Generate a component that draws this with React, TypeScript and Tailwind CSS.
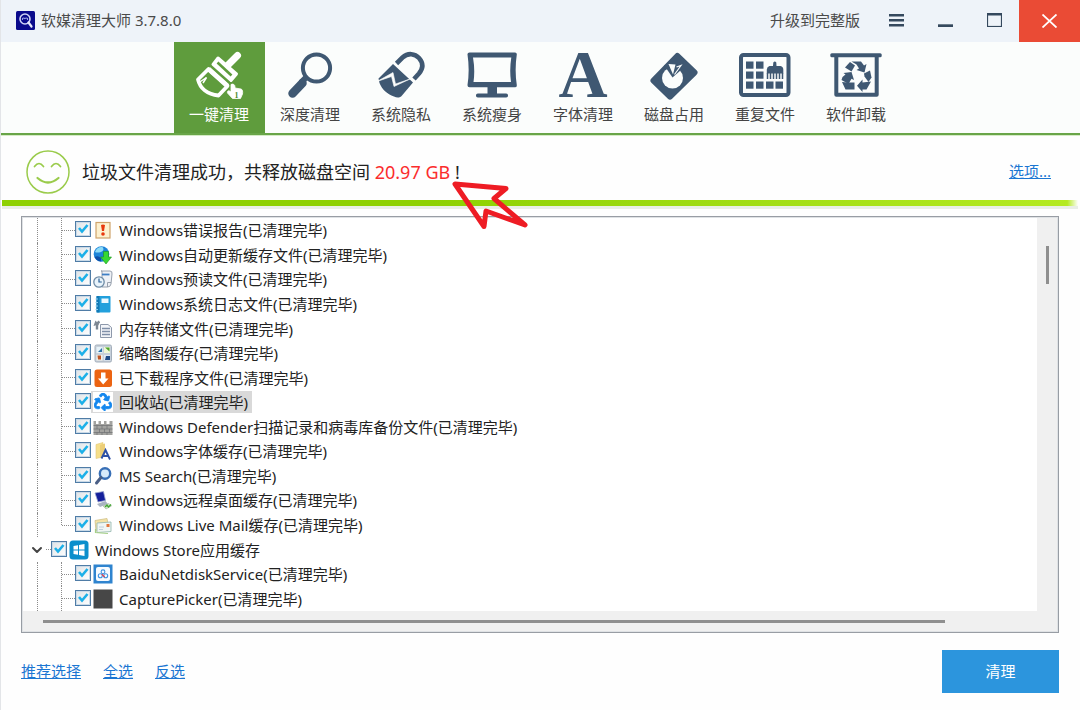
import React from 'react';
import { FaRecycle } from 'react-icons/fa';
import { ChevronDown } from 'lucide-react';
import clsx from 'clsx';

const SLATE = '#3f5872';

/* ---------- Toolbar icons ---------- */

function ToolIcon({ children }: { children: React.ReactNode }) {
  return (
    <svg viewBox="-2 0 52 49" className="h-[49px] w-[52px] overflow-visible" fill={SLATE} aria-hidden="true">
      {children}
    </svg>
  );
}

function BrushIcon() {
  return (
    <ToolIcon>
      <path d="M42.500 4.500 L33 14" stroke="#fff" strokeWidth="7" strokeLinecap="round" />
      <path d="M23 7 L41.500 23 L36 29.500 L18 13.500 Z" fill="#fff" stroke="#fff" strokeWidth="3" strokeLinejoin="round" />
      <path d="M22.500 11.500 L36.500 24.500" stroke="#5f9c3d" strokeWidth="2.600" />
      <path
        d="M13.500 18 L3 28.500 C5 37 12 43.500 23.500 44.500 L32.500 35 Z"
        fill="none"
        stroke="#fff"
        strokeWidth="3.800"
        strokeLinejoin="round"
      />
      <path d="M13.500 18 L32.500 35" stroke="#fff" strokeWidth="5" />
      <path d="M4 31.500 L11.500 26.500 L8 32" fill="none" stroke="#fff" strokeWidth="1.500" />
      <path
        d="M36 33.500 C38 32.500 40 33.500 40 36 L40 37 L46 38 C47.800 38.500 47.800 41 47.500 43 L45.500 47.500 L37.500 47.500 L32.500 42 C32 40 33.500 39 35.500 40.500 L36 41 Z"
        fill="#fff"
        stroke="#fff"
        strokeWidth="0.800"
      />
      <text x="39.500" y="46.500" fontSize="8" fontWeight="700" fontFamily="Liberation Serif, serif" fill="#4d8a2c">
        1
      </text>
    </ToolIcon>
  );
}

function MagnifierIcon() {
  return (
    <ToolIcon>
      <circle cx="30.500" cy="17" r="13.600" fill="none" stroke={SLATE} strokeWidth="4" />
      <path d="M20 26.500 L15 31.500" stroke={SLATE} strokeWidth="6" />
      <path d="M16.500 32 L6.500 42.500" stroke={SLATE} strokeWidth="8.500" strokeLinecap="round" />
    </ToolIcon>
  );
}

function PadlockIcon() {
  return (
    <ToolIcon>
      <path
        d="M19.500 12.500 L25.500 6.500 C31 1.500 38 2.500 42 7 C46 11.500 46.500 17 42 22.500 L37 28"
        fill="none"
        stroke={SLATE}
        strokeWidth="4.600"
      />
      <path d="M16 13 L36 31.500 L25 44.500 C23 47 20 47 17 45.500 C10 43 5 38.500 2.500 32 L1.500 27.500 Z" />
      <path d="M0 30.500 L16 21.500 L18.500 33 L33 28 L17 35.500 L14.500 25.500 Z" fill="#fbfdfc" stroke="#fbfdfc" strokeWidth="0.600" />
    </ToolIcon>
  );
}

function MonitorIcon() {
  return (
    <ToolIcon>
      <path
        fillRule="evenodd"
        d="M1.500 1.500 L47 1.500 Q49 1.500 48.800 3.500 Q46.500 19 48.800 34 Q49 36.300 47 36.300 L1.500 36.300 Q-0.700 36.300 -0.500 34 Q1.800 19 -0.500 3.500 Q-0.700 1.500 1.500 1.500 Z M5 6.500 Q7.200 19 5.500 31 L43 31 Q41.300 19 43.300 6.500 Z"
      />
      <rect x="19.500" y="36" width="9.500" height="7" />
      <rect x="8" y="42.500" width="32" height="4" rx="1.800" />
    </ToolIcon>
  );
}

function LetterIcon() {
  return (
    <ToolIcon>
      <text x="24" y="46" textAnchor="middle" fontSize="68" fontWeight="700" fontFamily="Liberation Serif, serif">
        A
      </text>
    </ToolIcon>
  );
}

function DiskIcon() {
  return (
    <ToolIcon>
      <path
        d="M27.300 5 L44.500 21.500 L20 45.500 L3.500 29.500 Z"
        stroke={SLATE}
        strokeWidth="6"
        strokeLinejoin="round"
      />
      <circle cx="22.500" cy="27" r="10.500" fill="#fbfdfc" />
      <path d="M22.500 26.500 L14 14 L33 13 L31 19 Z" />
      <path d="M18.500 13 L25.500 13.500 L23 23.500 Z" fill="#fbfdfc" />
      <path d="M26.500 16 L31 14.500 L24.500 23.500" fill="none" stroke="#fbfdfc" strokeWidth="1.200" />
    </ToolIcon>
  );
}

function DuplicateIcon() {
  const cells = [
    [5, 10.5], [15, 10.5],
    [5, 20.5], [15, 20.5],
    [5, 30.5], [15, 30.5], [25, 30.5], [34.5, 30.5],
  ];
  return (
    <ToolIcon>
      <rect x="0" y="4" width="47.500" height="40" rx="2.500" fill="none" stroke={SLATE} strokeWidth="4" />
      {cells.map(([x, y]) => (
        <rect key={`${x}-${y}`} x={x} y={y} width="7.500" height="7.200" />
      ))}
      <path d="M32.300 11.500 Q33.800 9.500 35.300 11.500 L35.500 15 L39.500 15 Q42.300 15.500 42.300 18.500 L42.300 22.500 L25.800 22.500 L25.800 18.500 Q26 15.500 28.500 15 L32 15 Z" />
      <path d="M26.500 22 V28 M29.500 22 V28 M32.500 22 V28 M35.500 22 V28 M38.500 22 V28 M41.500 22 V28" stroke={SLATE} strokeWidth="1.500" />
    </ToolIcon>
  );
}

function UninstallIcon() {
  return (
    <ToolIcon>
      <rect x="-1.700" y="2.300" width="51.400" height="4" rx="1.500" />
      <path d="M4.300 5 V43.700 H44.700 V5" fill="none" stroke={SLATE} strokeWidth="4" strokeLinejoin="round" />
      {/* three chasing arrows, each a folded band with its arrowhead */}
      <path d="M19.500 10.500 H29 L32 14.500 L34.500 13 L32.500 21.500 L24.500 19 L27 17.500 L24.500 13.500 Z" />
      <path d="M18 11 L23 14.500 L19.500 20.500 L13 16.500 Z" />
      <path d="M11.500 22 L19.500 21 L22 29 L19.500 27.800 L16.500 33 L9.500 29 L10.500 26 L13.500 23.500 Z" />
      <path d="M10 31 L13.500 38.500 H22.500 V31.500 H15.500 Z" />
      <path d="M32 22.500 L38 19.500 L39.500 26.500 L36.500 31 L32.500 25.500 Z" />
      <path d="M30.500 28.500 L25 34.800 L30.500 41 V38.500 H34.500 L39 30.500 L30.500 31.500 Z" />
    </ToolIcon>
  );
}

/* ---------- List icons ---------- */

function ItemIcon({ children }: { children: React.ReactNode }) {
  return (
    <svg viewBox="0 0 20 20" className="h-5 w-5 shrink-0" fill="none" aria-hidden="true">
      {children}
    </svg>
  );
}

const icons: Record<string, React.ReactNode> = {
  error: (
    <ItemIcon>
      <rect x="3" y="2.500" width="14" height="15.500" fill="#fdf1cf" stroke="#cfa46c" strokeWidth="1.200" />
      <path d="M8 5 Q10 3.800 12 5 L11 11 H9 Z" fill="#e8380d" />
      <circle cx="10" cy="14" r="1.800" fill="#e8380d" />
    </ItemIcon>
  ),
  update: (
    <ItemIcon>
      <circle cx="8.500" cy="9" r="7.800" fill="#1d84d8" />
      <path d="M2 7 Q4 1.500 9.500 2 Q12 5 8 7 Q4 8 2 7 Z" fill="#8fdcf7" />
      <path d="M1.500 12 Q5 10 8 13 L8 16.500 Q3.500 16 1.500 12 Z" fill="#0c4fa8" />
      <path d="M10.500 6.500 H15.500 V12 H18.500 L13 19 L7.500 12 H10.500 Z" fill="#37d832" stroke="#1c9420" strokeWidth="0.600" />
    </ItemIcon>
  ),
  prefetch: (
    <ItemIcon>
      <path d="M8 2 H17 Q19.500 2 19 5 L18 15 Q17.500 18 14.500 18 H9 V2 Z" fill="#eef1f6" stroke="#98a1ae" />
      <path d="M9 5.500 H16.500" stroke="#3e7ec4" strokeWidth="1.800" />
      <path d="M14.500 18 V13.500 H18" stroke="#98a1ae" />
      <circle cx="6" cy="13" r="5.200" fill="#e8f3fb" stroke="#6e8ba5" strokeWidth="1.300" />
      <path d="M6 9.500 V13 H8.800" stroke="#2b6196" strokeWidth="1.200" />
    </ItemIcon>
  ),
  log: (
    <ItemIcon>
      <rect x="3.500" y="2" width="14" height="16.500" rx="1" fill="#22a0dc" />
      <rect x="3.500" y="2" width="3" height="16.500" fill="#1279b5" />
      <rect x="8.500" y="4.500" width="7" height="4.500" fill="#eaf8ff" />
      <path d="M2.500 5 H5 M2.500 8.500 H5 M2.500 12 H5 M2.500 15.500 H5" stroke="#8ccff0" />
    </ItemIcon>
  ),
  dump: (
    <ItemIcon>
      <path d="M4 10.500 V7 Q4 4 6.500 2.500" stroke="#7d8792" strokeWidth="2.400" />
      <path d="M0.500 7 L2.500 1.500 L6 5.500 Z" fill="#7d8792" />
      <path d="M7.500 5.500 H15 L18.500 8.500 V18.500 H7.500 Z" fill="#f3f5f9" stroke="#8e99ab" />
      <path d="M9 9.500 H17 M9 12.500 H17 M9 15.500 H17" stroke="#7f8fa8" strokeWidth="1.400" />
    </ItemIcon>
  ),
  thumbs: (
    <ItemIcon>
      <rect x="2" y="2" width="16.500" height="17" rx="1.500" fill="#c7d0da" stroke="#a4afbb" />
      <rect x="3.500" y="4" width="6" height="6" fill="#e6f2f8" />
      <rect x="11" y="4" width="6" height="6" fill="#f0f7d6" />
      <rect x="3.500" y="12" width="6" height="5.500" fill="#f3f0e8" />
      <rect x="11" y="12" width="6" height="5.500" fill="#e0e9f6" />
      <path d="M5 9 L9 5 V9 Z" fill="#2871a8" />
      <path d="M12 4.500 L16.500 8.500 V4.500 Z" fill="#4da52b" />
      <path d="M4.500 12.500 H8 V16.500 H5 Z" fill="#bd5424" />
      <path d="M13 13 H17 V17 H12 Z" fill="#1e4b88" />
    </ItemIcon>
  ),
  download: (
    <ItemIcon>
      <rect x="1.500" y="1.500" width="17.500" height="17.500" rx="2.500" fill="#ec6412" />
      <path d="M8 4.500 H12.500 V10.500 H15.500 L10.200 16.500 L5 10.500 H8 Z" fill="#fff" />
    </ItemIcon>
  ),
  recycle: (
    <ItemIcon>
      <rect width="20" height="20" fill="#fff" />
      <FaRecycle x="1" y="1" size="18" color="#1487ee" stroke="#1487ee" strokeWidth="24" />
    </ItemIcon>
  ),
  defender: (
    <ItemIcon>
      <path d="M0.500 4 H3 V7 H5.500 V4 H8 V7 H11 V4 H13.500 V7 H16.500 V4 H19.500 V18 H0.500 Z" fill="#a3a3a0" />
      <path
        d="M0.500 8.500 H19.500 M0.500 12 H19.500 M0.500 15.500 H19.500 M4 8.500 V12 M9 8.500 V12 M14 8.500 V12 M6.500 12 V15.500 M11.500 12 V15.500 M16.500 12 V15.500 M4 15.500 V18 M9 15.500 V18 M14 15.500 V18"
        stroke="#6f7072"
        strokeWidth="0.700"
      />
    </ItemIcon>
  ),
  fonts: (
    <ItemIcon>
      <path d="M3 3.500 L10 1.500 V16 L3 17.500 Z" fill="#f6df8a" stroke="#e2c878" strokeWidth="0.600" />
      <path d="M7 4 L12 2.500 V15 L7 17 Z" fill="#ecce78" />
      <path d="M8.500 17.500 L12.500 9 L17 18.500 M10.500 15 H15" stroke="#2c50a6" strokeWidth="1.900" />
    </ItemIcon>
  ),
  search: (
    <ItemIcon>
      <circle cx="12" cy="7.500" r="5.200" fill="#d8ebfa" stroke="#386fb6" strokeWidth="2.400" />
      <path d="M8 11.500 L3.500 17" stroke="#4a5f86" strokeWidth="3" strokeLinecap="round" />
    </ItemIcon>
  ),
  remote: (
    <ItemIcon>
      <path d="M2 3 L10.500 1.500 L12.500 10.500 L5 12 Z" fill="#15209c" stroke="#9aa6cf" strokeWidth="0.800" />
      <path d="M4 14 L12.500 11 L15 14 L7 17 Z" fill="#a9b3c2" />
      <path d="M10 16 L16 13.500 L18.500 16 L13 19 Z" fill="#d7e3d4" stroke="#9fb39a" strokeWidth="0.600" />
      <path d="M12 17 L14 15 L15.500 17 L18 14.500" stroke="#42a832" strokeWidth="1.300" />
    </ItemIcon>
  ),
  mail: (
    <ItemIcon>
      <path d="M2 5.500 L14 3.500 L16 14 L3 16 Z" fill="#f5e3a4" stroke="#cfc08a" strokeWidth="0.800" />
      <path d="M4 8 L18 7 V16.500 L4 17.500 Z" fill="#f1f6f3" stroke="#9cbcb4" strokeWidth="0.900" />
      <path d="M2.500 14 L2.500 17.500 L15 18.500" stroke="#a5cf85" strokeWidth="1.200" />
      <rect x="13.500" y="9" width="3" height="3" fill="#e2773d" />
      <path d="M6 12 H11 M6 14.500 H10" stroke="#b3c5d6" strokeWidth="0.800" />
    </ItemIcon>
  ),
  store: (
    <ItemIcon>
      <rect x="0.500" y="0.500" width="19" height="19" rx="3.500" fill="#0b8fcc" />
      <path d="M4.500 6 L9 5.200 V9.500 H4.500 Z M10 5 L15.500 4 V9.500 H10 Z M4.500 10.500 H9 V14.800 L4.500 14.100 Z M10 10.500 H15.500 V16 L10 15 Z" fill="#fff" />
    </ItemIcon>
  ),
  baidu: (
    <ItemIcon>
      <rect x="0.500" y="0.500" width="19" height="19" fill="#2f84cf" />
      <rect x="3" y="3" width="14" height="14" rx="2" fill="#f7fbff" />
      <circle cx="10" cy="7.800" r="1.900" stroke="#3d91e0" strokeWidth="1.100" />
      <circle cx="7.300" cy="11.800" r="2" stroke="#3d91e0" strokeWidth="1.100" />
      <circle cx="12.700" cy="11.800" r="2" stroke="#3d91e0" strokeWidth="1.100" />
      <path d="M8.800 10.200 L11.600 13" stroke="#e2434f" strokeWidth="1.300" />
    </ItemIcon>
  ),
  capture: (
    <ItemIcon>
      <rect x="0.500" y="0.500" width="19" height="19" fill="#474747" />
    </ItemIcon>
  ),
};

/* ---------- Data ---------- */

const tools = [
  { label: '一键清理', icon: <BrushIcon />, active: true },
  { label: '深度清理', icon: <MagnifierIcon /> },
  { label: '系统隐私', icon: <PadlockIcon /> },
  { label: '系统瘦身', icon: <MonitorIcon /> },
  { label: '字体清理', icon: <LetterIcon /> },
  { label: '磁盘占用', icon: <DiskIcon /> },
  { label: '重复文件', icon: <DuplicateIcon /> },
  { label: '软件卸载', icon: <UninstallIcon /> },
];

interface TreeItem {
  label: string;
  icon: string;
  group?: boolean;
  selected?: boolean;
  last?: boolean;
}

const items: TreeItem[] = [
  { label: 'Windows错误报告(已清理完毕)', icon: 'error' },
  { label: 'Windows自动更新缓存文件(已清理完毕)', icon: 'update' },
  { label: 'Windows预读文件(已清理完毕)', icon: 'prefetch' },
  { label: 'Windows系统日志文件(已清理完毕)', icon: 'log' },
  { label: '内存转储文件(已清理完毕)', icon: 'dump' },
  { label: '缩略图缓存(已清理完毕)', icon: 'thumbs' },
  { label: '已下载程序文件(已清理完毕)', icon: 'download' },
  { label: '回收站(已清理完毕)', icon: 'recycle', selected: true },
  { label: 'Windows Defender扫描记录和病毒库备份文件(已清理完毕)', icon: 'defender' },
  { label: 'Windows字体缓存(已清理完毕)', icon: 'fonts' },
  { label: 'MS Search(已清理完毕)', icon: 'search' },
  { label: 'Windows远程桌面缓存(已清理完毕)', icon: 'remote' },
  { label: 'Windows Live Mail缓存(已清理完毕)', icon: 'mail', last: true },
  { label: 'Windows Store应用缓存', icon: 'store', group: true },
  { label: 'BaiduNetdiskService(已清理完毕)', icon: 'baidu' },
  { label: 'CapturePicker(已清理完毕)', icon: 'capture' },
];

/* ---------- Sections ---------- */

function TitleBar() {
  return (
    <header className="flex h-[42px] items-center bg-[#eef3f9] pb-0.5 pl-[15px] text-[#4a4a4a]">
      <svg viewBox="0 0 19 19" className="mr-1.5 h-[19px] w-[19px]" fill="none" aria-hidden="true">
        <rect width="19" height="19" rx="1.500" fill="#0a0a8c" />
        <circle cx="9" cy="8" r="5" stroke="#cfd3f5" strokeWidth="1.600" />
        <path d="M6.500 9 V7.500 Q7.500 6.500 8.800 7.500 Q10.500 6.500 11.500 7.500 V9" stroke="#9aa0e6" strokeWidth="1.100" />
        <path d="M12.500 11.500 L15.500 15.500" stroke="#e6e8fb" strokeWidth="2.200" strokeLinecap="round" />
      </svg>
      <h1 className="flex-1">软媒清理大师 3.7.8.0</h1>
      <a href="#upgrade">升级到完整版</a>
      <button type="button" aria-label="菜单" className="ml-3 flex h-10 w-[49px] items-center justify-center">
        <svg viewBox="0 0 15 13" className="h-[13px] w-[15px]" fill="#35495e">
          <path d="M0 0 H15 V2.500 H0 Z M0 5 H15 V7.500 H0 Z M0 10 H15 V12.500 H0 Z" />
        </svg>
      </button>
      <button type="button" aria-label="最小化" className="flex h-10 w-[49px] items-center justify-center">
        <svg viewBox="0 0 15 13" className="h-[13px] w-[15px]" fill="#35495e">
          <path d="M0 10.300 H15 V13 H0 Z" />
        </svg>
      </button>
      <button type="button" aria-label="最大化" className="flex h-10 w-[49px] items-center justify-center">
        <svg viewBox="0 0 15 14" className="h-[14px] w-[15px]" fill="none" stroke="#35495e">
          <rect x="0.500" y="0.500" width="14" height="13" strokeWidth="1.200" />
          <path d="M0 1.500 H15" strokeWidth="2" />
        </svg>
      </button>
      <button
        type="button"
        aria-label="关闭"
        className="-mb-0.5 flex h-[42px] w-[61px] items-center justify-center bg-[#ea4b35]"
      >
        <svg viewBox="0 0 15 14" className="h-[14px] w-[15px]" stroke="#fff" strokeWidth="1.800">
          <path d="M0.500 0.500 L14.500 13.500 M14.500 0.500 L0.500 13.500" />
        </svg>
      </button>
    </header>
  );
}

function Toolbar() {
  return (
    <nav className="flex justify-center border-b-2 border-[#69a548] bg-[#fbfdfc] pr-1.5 shadow-[0_1px_0_#d5ebc6]">
      {tools.map((tool) => (
        <button
          key={tool.label}
          type="button"
          className={clsx(
            'flex h-[91px] w-[91px] flex-col items-center pt-[9px]',
            tool.active ? 'bg-[#5f9c3d] text-white' : 'text-[#444]'
          )}
        >
          {tool.icon}
          <span className="mt-1 leading-5">{tool.label}</span>
        </button>
      ))}
    </nav>
  );
}

function StatusBanner() {
  return (
    <section>
      <div className="flex h-[65px] items-center pt-2 pr-[29px] pl-[25px]">
        <svg viewBox="0 0 44 44" className="mr-3 h-11 w-11" fill="none" stroke="#9acb4b" strokeLinecap="round" aria-hidden="true">
          <circle cx="22" cy="22" r="21" strokeWidth="1.500" />
          <path d="M8.500 16.500 Q13 10.500 17.500 16.500 M25.500 16.500 Q30 10.500 34.500 16.500" strokeWidth="1.700" />
          <path d="M11.500 28 Q22 37 32.500 28" strokeWidth="2.200" />
        </svg>
        <p className="flex-1 text-lg text-[#222]">
          垃圾文件清理成功，共释放磁盘空间{' '}
          <span className="relative text-[#fb2c2c]">
            20.97 GB
            <svg
              viewBox="0 0 78 50"
              className="pointer-events-none absolute top-5 left-[76px] z-10 h-[50px] w-[78px]"
              fill="none"
              stroke="#ee1c24"
              strokeWidth="5"
              strokeLinejoin="round"
              aria-hidden="true"
            >
              <path d="M4 4 L55 8.500 L43 18.500 L74 45 L35 31 L33 46.500 Z" />
            </svg>
          </span>{' '}
          !
        </p>
        <a href="#options" className="text-[#1b76d2] underline">选项...</a>
      </div>
      <div className="mr-0.5 ml-px h-1.5 bg-linear-to-r from-[#8ed102] from-40% via-[#b4ea20] via-99% to-transparent" />
      <div className="mr-0.5 ml-px h-[3px] bg-[#e9eee6]" />
    </section>
  );
}

function CheckBox({ id }: { id: string }) {
  return (
    <span className="relative mb-0.5 h-4 w-4 shrink-0 self-center">
      <input
        id={id}
        type="checkbox"
        defaultChecked
        className="peer block h-4 w-4 appearance-none border border-[#4f7ca6] bg-linear-to-br from-[#dfe3e6] to-white shadow-[inset_0_0_0_1px_#c9dae8]"
      />
      <svg
        viewBox="0 0 16 16"
        className="pointer-events-none absolute inset-0 hidden h-4 w-4 peer-checked:block"
        fill="none"
        stroke="#1cb0e8"
        strokeWidth="2.600"
      >
        <path d="M4 7 L7 10.500 L12.500 4" />
      </svg>
    </span>
  );
}

function TreeRow({ item }: { item: TreeItem }) {
  const id = `item-${item.icon}`;
  return (
    <li className="flex min-h-6 flex-1">
      {item.group ? (
        <>
          <button type="button" aria-label="折叠" className="-ml-[9px] flex w-[18px] items-center justify-center">
            <ChevronDown className="h-4 w-4 shrink-0 text-[#444]" strokeWidth={3} />
          </button>
          <span className="w-[5px] self-center border-t border-dotted border-[#8c8c8c]" />
        </>
      ) : (
        <>
          <span className="w-6 border-l border-dotted border-[#8c8c8c]" />
          <span className="flex w-3.5">
            <span className={clsx('w-px border-l border-dotted border-[#8c8c8c]', item.last && 'mb-3')} />
            <span className="flex-1 self-center border-t border-dotted border-[#8c8c8c]" />
          </span>
        </>
      )}
      <CheckBox id={id} />
      <label
        htmlFor={id}
        className={clsx(
          'flex items-center gap-1.5 self-center py-px pr-1 pl-0.5 leading-5 whitespace-nowrap text-[#222]',
          item.selected && 'bg-[#d9d9d9]'
        )}
      >
        {icons[item.icon]}
        <span>{item.label}</span>
      </label>
    </li>
  );
}

function CleanList() {
  return (
    <main className="mr-[21px] ml-5 mt-[7px] flex flex-1 flex-col border border-[#989da4] bg-[#f0f0f0] p-px shadow-[inset_0_0_0_1px_#dfe2e5]">
      <div className="flex flex-1">
        <ul className="flex flex-1 flex-col overflow-hidden bg-white pl-3.5">
          {items.map((item) => (
            <TreeRow key={item.icon} item={item} />
          ))}
        </ul>
        <div className="flex w-5 justify-center pt-7">
          <div className="h-[38px] w-[3px] bg-[#8f8f8f]" />
        </div>
      </div>
      <div className="flex h-5 items-center pr-28 pl-5">
        <div className="h-[3px] flex-1 bg-[#8f8f8f]" />
      </div>
    </main>
  );
}

function Footer() {
  return (
    <footer className="flex items-center gap-[22px] py-[17px] pr-[21px] pl-5 text-[#1b76d2]">
      <a href="#recommended" className="underline">推荐选择</a>
      <a href="#all" className="underline">全选</a>
      <a href="#invert" className="underline">反选</a>
      <button type="button" className="ml-auto h-[43px] w-[117px] bg-[#2c95dd] text-white">
        清理
      </button>
    </footer>
  );
}

export default function App() {
  return (
    <div className="flex min-h-screen flex-col border-l border-[#e3e5e8] bg-[#fefefe] font-['Noto_Sans','Noto_Sans_CJK_SC',sans-serif] text-[15px]">
      <TitleBar />
      <Toolbar />
      <StatusBanner />
      <CleanList />
      <Footer />
    </div>
  );
}
